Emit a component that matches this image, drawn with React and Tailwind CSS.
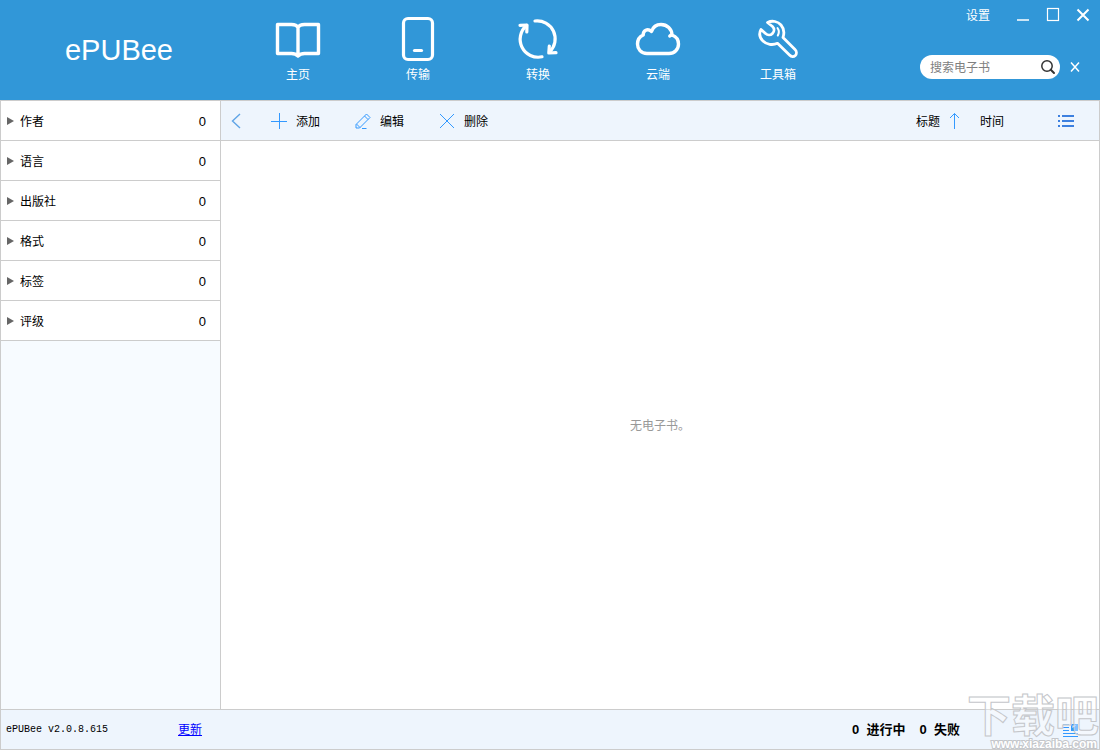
import React from 'react'

const BookIcon = () => (
    <svg viewBox="0 0 48 48" className="size-12" fill="none" stroke="currentColor" strokeWidth="3.4" strokeLinejoin="round" strokeLinecap="round">
        <path d="M3.5 8.5H17.5C20.5 8.5 23 9.5 24 11.5C25 9.5 27.5 8.5 30.5 8.5H44.5V37.5H30.5C27.5 37.5 25.5 38.5 24 40C22.5 38.5 20.5 37.5 17.5 37.5H3.5ZM24 11.5V39.5" />
    </svg>
)

const DeviceIcon = () => (
    <svg viewBox="0 0 48 48" className="size-12" fill="none" stroke="currentColor" strokeWidth="3.2" strokeLinecap="round">
        <rect x="9.5" y="2.5" width="29" height="41" rx="4.5" />
        <path d="M20.5 34.5H27.5" />
    </svg>
)

const ConvertIcon = () => (
    <svg viewBox="0 0 48 48" className="size-12" fill="none" stroke="currentColor" strokeWidth="3.2" strokeLinejoin="round" strokeLinecap="round">
        <path d="M21 5A18 18 0 0 1 35.5 36" />
        <path d="M35.3 30L34.8 37L42 36.7" />
        <path d="M28 40.8A18 18 0 0 1 12.5 9.5" />
        <path d="M6 9.3L13 9L12.8 16" />
    </svg>
)

const CloudIcon = () => (
    <svg viewBox="0 0 48 48" className="size-12" fill="none" stroke="currentColor" strokeWidth="3.4" strokeLinejoin="round" strokeLinecap="round">
        <path d="M13 37.5C7 37.5 3.5 33 3.5 28C3.5 23.5 5.8 20.5 9.2 19C9 14.5 13.5 12 17.5 15.5C19 11 22.5 8.5 27 8.5C33 8.5 38 13 38 19C42 20.5 44.5 24 44.5 28C44.5 33.5 40.5 37.5 35 37.5Z" />
        <path d="M38 19Q36.5 19 35.8 20" />
    </svg>
)

const WrenchIcon = () => (
    <svg viewBox="0 0 48 48" className="size-12" fill="none" stroke="currentColor" strokeWidth="2.8" strokeLinejoin="round" strokeLinecap="round">
        <path d="M13.5 6.5C18.5 4 24 5.5 27 9C30 12.5 30.5 17 29 21.5L41 33.5C43 35.5 42.700 38 41.3 39.5C39.8 41 37.5 41.2 35.5 39L23.5 27.3C18.5 29.5 12.5 28.5 9 25C5.5 21.5 5 17 7 13.5L11.5 17.5C13.5 19.3 16.5 19.5 18.5 17.5C20.5 15.5 20.5 12.5 18.5 10.5Z" />
        <path d="M23.5 12Q26 15.5 23.8 19.5" strokeWidth="2" />
    </svg>
)

const tabs = [
    { title: '主页', icon: BookIcon },
    { title: '传输', icon: DeviceIcon },
    { title: '转换', icon: ConvertIcon },
    { title: '云端', icon: CloudIcon },
    { title: '工具箱', icon: WrenchIcon },
]

const filters = [
    { title: '作者', count: 0 },
    { title: '语言', count: 0 },
    { title: '出版社', count: 0 },
    { title: '格式', count: 0 },
    { title: '标签', count: 0 },
    { title: '评级', count: 0 },
]

const Header = () => (
    <header className="flex h-[100px] shrink-0 bg-[#3197d8] text-white">
        <div className="flex w-[238px] items-center justify-center text-[29px]">ePUBee</div>

        <nav className="flex">
            {tabs.map((tab) => (
                <button key={tab.title} type="button" className="flex w-[120px] flex-col items-center pt-4">
                    <tab.icon />
                    <span className="leading-[22px]">{tab.title}</span>
                </button>
            ))}
        </nav>

        <div className="ml-auto flex flex-col items-end gap-[25px] pr-0.5">
            {/* Window controls */}
            <div className="flex h-[30px] items-center">
                <button type="button" className="mr-[18px] pt-0.5">设置</button>
                <button type="button" aria-label="最小化" className="flex w-[30px] justify-center">
                    <svg viewBox="0 0 16 16" className="size-4" fill="none" stroke="currentColor">
                        <path d="M2 13H14" strokeWidth="1.5" />
                    </svg>
                </button>
                <button type="button" aria-label="最大化" className="flex w-[30px] justify-center">
                    <svg viewBox="0 0 16 16" className="size-4" fill="none" stroke="currentColor">
                        <rect x="2.5" y="1.5" width="11" height="12" strokeWidth="1.2" />
                    </svg>
                </button>
                <button type="button" aria-label="关闭" className="flex w-[30px] justify-center">
                    <svg viewBox="0 0 16 16" className="size-4" fill="none" stroke="currentColor">
                        <path d="M2.5 2.5L13.5 13.5M13.5 2.5L2.5 13.5" strokeWidth="2" />
                    </svg>
                </button>
            </div>

            {/* Search */}
            <div className="flex items-center pr-[17px]">
                <label className="flex h-6 w-[140px] items-center rounded-full bg-white pr-1 pl-2.5">
                    <input
                        type="text"
                        aria-label="搜索电子书"
                        placeholder="搜索电子书"
                        className="min-w-0 flex-1 pt-0.5 text-black outline-none placeholder:text-[#808080]"
                    />
                    <svg viewBox="0 0 16 16" className="size-4 shrink-0 text-[#333333]" fill="none" stroke="currentColor">
                        <circle cx="7" cy="7" r="5.2" strokeWidth="1.5" />
                        <path d="M10.8 10.8L14 14" strokeWidth="2" strokeLinecap="round" />
                    </svg>
                </label>
                <button type="button" aria-label="清除搜索" className="ml-[9px]">
                    <svg viewBox="0 0 12 12" className="size-3" fill="none" stroke="currentColor" strokeWidth="1.5">
                        <path d="M2 1.5L10 10.5M10 1.5L2 10.5" />
                    </svg>
                </button>
            </div>
        </div>
    </header>
)

const Sidebar = () => (
    <aside className="w-[220px] shrink-0 border-r border-[#cccccc] bg-[#f7fbff]">
        {filters.map((item) => (
            <button
                key={item.title}
                type="button"
                className="flex h-10 w-full items-center border-b border-[#cccccc] bg-white pr-3.5 pl-1.5"
            >
                <svg viewBox="0 0 8 8" className="mr-[5px] size-2" fill="#666666">
                    <path d="M0 0L7 4L0 8Z" />
                </svg>
                <span className="pt-0.5">{item.title}</span>
                <span className="ml-auto pt-0.5 text-[13px]">{item.count}</span>
            </button>
        ))}
    </aside>
)

const Toolbar = () => (
    <div className="flex h-10 shrink-0 items-center border-b border-[#cccccc] bg-[#eef5fd] pr-6 pl-2">
        <button type="button" aria-label="返回" className="mr-[25px]">
            <svg viewBox="0 0 16 16" className="size-4" fill="none" stroke="#5fa4e6" strokeWidth="1.4">
                <path d="M11 1L3.5 8L11 15" />
            </svg>
        </button>
        <button type="button" className="mr-[34px] flex items-center gap-2">
            <svg viewBox="0 0 18 18" className="size-[18px]" fill="none" stroke="#3399ff">
                <path d="M9.5 1V17M1 9.5H17" />
            </svg>
            <span className="pt-0.5">添加</span>
        </button>
        <button type="button" className="mr-[34px] flex items-center gap-2">
            <svg viewBox="0 0 18 18" className="size-[18px]" fill="none" stroke="#3399ff">
                <path d="M12.5 2L16 5.5L5.5 16H2V12.5ZM10.5 4L14 7.5M2.5 12L6 15.5M8 16.5H12.5" />
            </svg>
            <span className="pt-0.5">编辑</span>
        </button>
        <button type="button" className="flex items-center gap-2">
            <svg viewBox="0 0 18 18" className="size-[18px]" fill="none" stroke="#3399ff">
                <path d="M2 2L16 16M16 2L2 16" />
            </svg>
            <span className="pt-0.5">删除</span>
        </button>

        <button type="button" className="mr-5 ml-auto flex items-center gap-2">
            <span className="pt-0.5">标题</span>
            <svg viewBox="0 0 12 18" className="h-[18px] w-3" fill="none" stroke="#3399ff">
                <path d="M6.5 1.5V17M2 6L6.5 1.5L11 6" />
            </svg>
        </button>
        <button type="button" className="mr-[54px] pt-0.5">时间</button>
        <button type="button" aria-label="列表视图">
            <svg viewBox="0 0 17 14" className="h-3.5 w-[17px]" fill="#3d80df">
                <path d="M0 1H2V3H0ZM4 1H16V3H4ZM0 6H2V8H0ZM4 6H16V8H4ZM0 11H2V13H0ZM4 11H16V13H4Z" />
            </svg>
        </button>
    </div>
)

const StatusBar = () => (
    <footer className="relative flex h-10 shrink-0 items-center border-t border-[#cccccc] bg-[#eef5fd] pr-5 pl-[5px]">
        <span className="w-[172px] font-['Liberation_Mono',monospace] text-[10px]">ePUBee v2.0.8.615</span>
        <a href="#update" className="text-[#0000ff] underline">更新</a>

        <div className="ml-auto flex gap-3.5 text-[13px] font-bold">
            <span>0&nbsp; 进行中</span>
            <span>0&nbsp; 失败</span>
        </div>
        <button type="button" aria-label="任务列表" className="ml-[103px]">
            <svg viewBox="0 0 16 16" className="size-4" fill="none" stroke="#3399ff">
                <path d="M0 2.5H6M0 5.5H6M0 8.5H6M0 11.5H15M0 14.5H15" />
                <path d="M8 2H15V9H8Z" fill="#3399ff" stroke="none" />
                <path d="M9.5 6V3.5H13Z" fill="#ffffff" stroke="none" />
            </svg>
        </button>

        {/* Site mark lies over the corner of the window */}
        <div className="pointer-events-none absolute right-0 bottom-0 flex flex-col items-end whitespace-nowrap">
            <span className="text-[44px] leading-[44px] font-bold text-white/40 [-webkit-text-stroke:1px_#c4c6ca]">下载吧</span>
            <span className="pr-0.5 text-xs leading-2.5 font-bold text-white [-webkit-text-stroke:2px_#c4c6ca] [paint-order:stroke_fill]">www.xiazaiba.com</span>
        </div>
    </footer>
)

const App = () => (
    <div className="flex min-h-screen flex-col bg-white font-['Liberation_Sans','Noto_Sans_CJK_SC',sans-serif] text-xs text-black">
        <Header />
        <div className="flex flex-1 flex-col border border-[#cccccc]">
            <div className="flex flex-1">
                <Sidebar />
                <main className="flex min-w-0 flex-1 flex-col">
                    <Toolbar />
                    <div className="flex flex-1 items-center justify-center pt-0.5 text-[#999999]">无电子书。</div>
                </main>
            </div>
            <StatusBar />
        </div>
    </div>
)

export default App
